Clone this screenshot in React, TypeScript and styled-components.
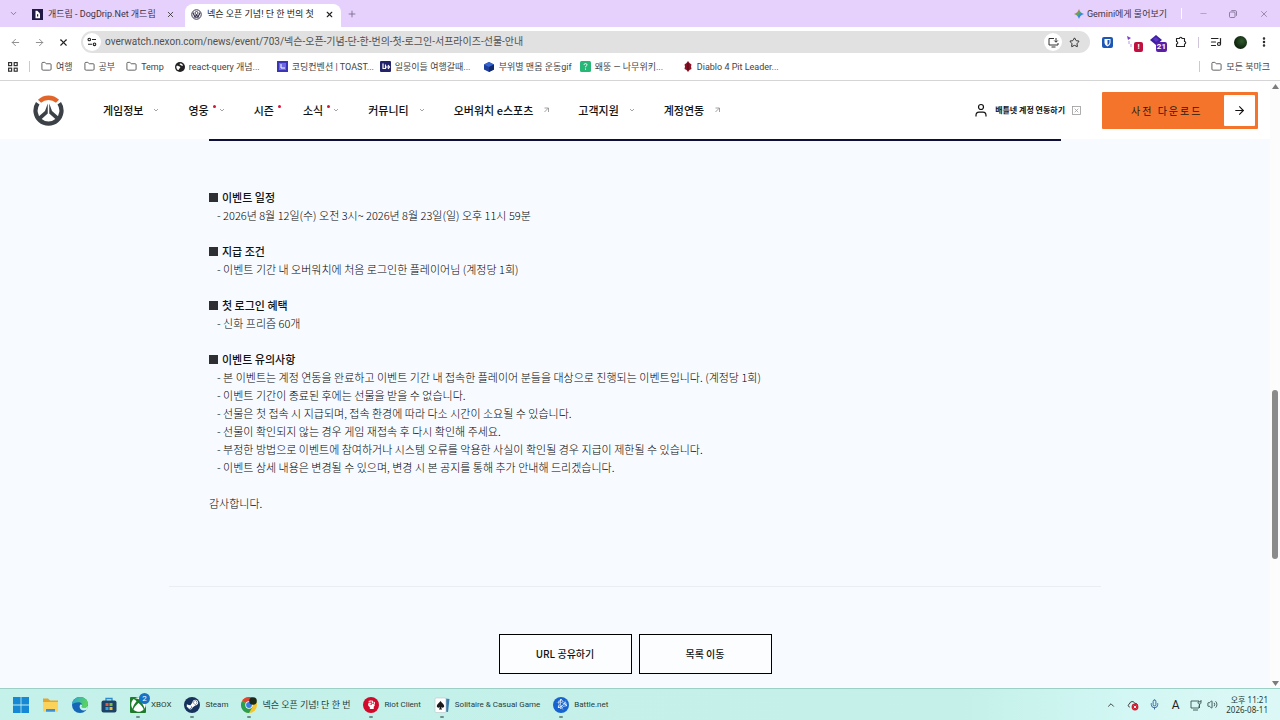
import React from 'react';
import styled, { createGlobalStyle, css } from 'styled-components';
import {
  ArrowLeft, ArrowRight, X, Plus, ChevronDown, ChevronUp, Star, Folder, Minus,
  Mic, Volume2, MoreVertical, ListMusic,
} from 'lucide-react';
import { FaXbox, FaSteamSymbol, FaBattleNet, FaHandFist } from 'react-icons/fa6';

const ui = 'Roboto, "Noto Sans CJK KR", sans-serif';
const clock = '"Noto Sans", "Noto Sans CJK KR", sans-serif';
const site = '"Noto Sans CJK KR", "Noto Sans", sans-serif';

const Global = createGlobalStyle`
  * { box-sizing: border-box; }
  body { margin: 0; background: #f7fbff; font-family: ${site}; color: #111; }
  button { font: inherit; color: inherit; border: 0; background: none; padding: 0; cursor: pointer; }
  a { color: inherit; text-decoration: none; }
  svg { display: block; flex: none; }
  ul, h1, h2, p { margin: 0; padding: 0; list-style: none; }
`;

const Screen = styled.div`
  min-height: 100vh;
  display: flex;
  flex-direction: column;
`;

/* ---------- browser chrome ---------- */

const TabStrip = styled.div`
  display: flex;
  align-items: center;
  height: 27px;
  padding: 0 8px 0 7px;
  background: #e6d0fc;
  font: 9px/14px ${ui};
  color: #3b3345;
`;

const IconButton = styled.button<{ $w?: number; $color?: string }>`
  display: flex;
  align-items: center;
  justify-content: center;
  flex: none;
  width: ${p => p.$w ?? 24}px;
  height: 20px;
  color: ${p => p.$color ?? '#222'};
`;

const Tabs = styled.div`
  display: flex;
  gap: 3px;
  margin-left: 7px;
`;

const Tab = styled.div<{ $active?: boolean }>`
  display: flex;
  align-items: center;
  gap: 5px;
  width: 156px;
  height: 23px;
  margin-top: 4px;
  padding: 0 6px 3px;
  border-radius: 8px 8px 0 0;
  ${p => p.$active && css`
    background: #fff;
    color: #222;
  `}
`;

const TabTitle = styled.span`
  flex: 1;
  white-space: nowrap;
`;

const Spacer = styled.div`
  flex: 1;
`;

const Rule = styled.span<{ $color?: string; $m?: number }>`
  width: 1px;
  height: 11px;
  margin: 0 ${p => p.$m ?? 12}px;
  background: ${p => p.$color ?? '#d0c6dc'};
`;

const GeminiButton = styled.button`
  display: flex;
  align-items: center;
  gap: 3px;
  white-space: nowrap;
`;

const WindowControls = styled.div`
  display: flex;
  gap: 16px;
`;

const Toolbar = styled.div`
  display: flex;
  align-items: center;
  height: 30px;
  padding: 0 4px 0 3px;
  background: #fff;
`;

const AddressBar = styled.form`
  display: flex;
  flex: 1;
  align-items: center;
  height: 22px;
  margin: 0 5px 0 6px;
  padding: 0 4px 0 2px;
  border-radius: 11px;
  background: #e1e1e1;
`;

const AddressInput = styled.input`
  flex: 1;
  min-width: 0;
  margin-left: 4px;
  padding: 0;
  border: 0;
  outline: 0;
  background: none;
  color: #505050;
  font: 10px/16px ${ui};
`;

const Round = styled.button`
  display: flex;
  align-items: center;
  justify-content: center;
  width: 18px;
  height: 18px;
  border-radius: 50%;
  background: #fff;
`;

const ExtensionBadge = styled.span<{ $bg: string }>`
  position: absolute;
  right: 2px;
  bottom: 0;
  min-width: 9px;
  padding: 0 1px;
  border-radius: 2px;
  background: ${p => p.$bg};
  color: #fff;
  font: 700 8px/10px ${ui};
  text-align: center;
`;

const Extension = styled(IconButton)`
  position: relative;
`;

const Avatar = styled.span`
  width: 13px;
  height: 13px;
  border-radius: 50%;
  background: radial-gradient(circle at 60% 40%, #2f5a2c, #10240f 65%);
`;

const Bookmarks = styled.nav`
  display: flex;
  align-items: center;
  gap: 11px;
  height: 24px;
  padding: 0 10px 4px 8px;
  border-bottom: 1px solid #d5d5d5;
  background: #fff;
  font: 9px/14px ${ui};
  color: #444;
`;

const Bookmark = styled.a<{ $w?: number }>`
  display: flex;
  flex: none;
  align-items: center;
  gap: 4px;
  width: ${p => (p.$w ? p.$w + 'px' : 'auto')};
  white-space: nowrap;
`;

/* ---------- site ---------- */

const Viewport = styled.div`
  display: flex;
  flex: 1;
`;

const Site = styled.div`
  flex: 1;
  min-width: 0;
`;

const SiteHeader = styled.header`
  display: flex;
  align-items: center;
  height: 58px;
  padding: 0 12px 0 33px;
  background: #fff;
  color: #111;
`;

const Nav = styled.nav`
  display: flex;
  gap: 29px;
  margin-left: 39px;
  font-size: 11px;
  font-weight: 500;
  line-height: 18px;
`;

const NavLink = styled.a`
  display: flex;
  align-items: center;
  gap: 10px;
  white-space: nowrap;
`;

const NavText = styled.span<{ $dot?: boolean }>`
  position: relative;
  ${p => p.$dot && css`
    &::after {
      content: '';
      position: absolute;
      top: 4px;
      right: -7px;
      width: 3px;
      height: 3px;
      border-radius: 50%;
      background: #d6133d;
    }
  `}
`;

const Account = styled.a`
  display: flex;
  align-items: center;
  gap: 7px;
  margin-right: 21px;
  font-size: 8px;
  font-weight: 700;
  line-height: 14px;
  white-space: nowrap;
`;

const Download = styled.button`
  display: flex;
  align-items: center;
  justify-content: space-between;
  width: 156px;
  height: 37px;
  padding: 3px 3px 3px 29px;
  border-radius: 1px;
  background: #f4742b;
  color: #2b1a12;
  font-size: 10px;
  letter-spacing: 2px;
  white-space: nowrap;
`;

const DownloadArrow = styled.span`
  display: flex;
  align-items: center;
  justify-content: center;
  width: 31px;
  height: 31px;
  border-radius: 1px;
  background: #fff;
`;

const Main = styled.main`
  max-width: 932px;
  margin: 0 auto;
`;

const Article = styled.article`
  margin: 0 40px;
  padding: 47px 0 74px;
  border-top: 2px solid #0f0f3c;
  font-size: 11px;
  font-weight: 300;
  line-height: 18px;
  color: #000;
`;

const Section = styled.section`
  margin-bottom: 18px;
`;

const SectionTitle = styled.h2`
  display: flex;
  align-items: center;
  gap: 4px;
  font-size: 11px;
  font-weight: 500;
  line-height: 18px;
  color: #111;

  &::before {
    content: '';
    width: 9px;
    height: 9px;
    background: #2e2f33;
  }
`;

const Notes = styled.ul`
  padding-left: 8px;
`;

const Actions = styled.div`
  display: flex;
  justify-content: center;
  gap: 7px;
  padding: 47px 0 14px;
  border-top: 1px solid #eaeef2;
`;

const ActionButton = styled.button`
  width: 133px;
  height: 40px;
  border: 1px solid #000;
  background: #fbfdff;
  font-size: 10px;
  font-weight: 500;
  line-height: 18px;
  color: #111;
`;

const ScrollTrack = styled.div`
  display: flex;
  flex-direction: column;
  align-items: center;
  width: 10px;
  padding: 3px 0 2px;
  background: #fcfcfc;
`;

const ScrollSpace = styled.div<{ $share: number }>`
  flex: ${p => p.$share};
`;

const ScrollThumb = styled.div`
  flex: 169;
  width: 6px;
  border-radius: 3px;
  background: #8b8b8b;
`;

/* ---------- taskbar ---------- */

const Taskbar = styled.footer`
  display: flex;
  align-items: center;
  height: 32px;
  padding: 0 12px 0 13px;
  border-top: 1px solid #9ccfc6;
  background: linear-gradient(90deg, #c5f1eb, #c4f0e9 75%, #d2f7f4 88%, #dcf8f6);
  font: 8px/14px ${ui};
  color: #25403d;
`;

const Apps = styled.div`
  display: flex;
  align-items: center;
  gap: 13px;
`;

const TaskButton = styled.button<{ $running?: boolean }>`
  position: relative;
  display: flex;
  align-items: center;
  gap: 5px;
  height: 30px;
  ${p => p.$running && css`
    &::after {
      content: '';
      position: absolute;
      left: 6px;
      bottom: 2px;
      width: 4px;
      height: 2px;
      border-radius: 1px;
      background: #6f8f8b;
    }
  `}
`;

const AppLabel = styled.span<{ $korean?: boolean }>`
  font-size: ${p => (p.$korean ? 9 : 8)}px;
  white-space: nowrap;
`;

const Disc = styled.span<{ $bg: string; $square?: boolean }>`
  display: flex;
  align-items: center;
  justify-content: center;
  width: 16px;
  height: 16px;
  border-radius: ${p => (p.$square ? '1px' : '50%')};
  background: ${p => p.$bg};
  color: #fff;
`;

const Count = styled.span`
  position: absolute;
  left: 9px;
  top: 3px;
  width: 11px;
  height: 11px;
  border-radius: 50%;
  background: #1673c4;
  color: #fff;
  font: 8px/11px ${ui};
  text-align: center;
`;

const Tray = styled.div`
  display: flex;
  align-items: center;
  color: #35504d;
`;

const ImeButton = styled(IconButton)`
  font-size: 12px;
`;

const Clock = styled.div`
  margin-left: 8px;
  font: 8px/10px ${clock};
  text-align: right;
  white-space: nowrap;
  color: #1f3b38;
`;

/* ---------- drawings ---------- */

const DogDripIcon = () => (
  <svg width="11" height="11" viewBox="0 0 11 11">
    <rect width="11" height="11" fill="#211a45" />
    <path d="M3.500 1.800h1.800l2.700 2.700v4.700h-4.500z" fill="#fff" />
    <path d="M5 5.300h1.200v2.200H5z" fill="#211a45" />
  </svg>
);

const NexonIcon = () => (
  <svg width="11" height="11" viewBox="0 0 22 22" fill="none" stroke="#3b3551">
    <circle cx="11" cy="11" r="9.500" strokeWidth="2" />
    <path d="M4 7c2 8 5 9 7 5 2 4 5 3 7-5M6 15c2 2 8 2 10 0" strokeWidth="2.200" />
    <circle cx="11" cy="8" r="3" strokeWidth="1.800" />
  </svg>
);

const GeminiIcon = () => (
  <svg width="10" height="10" viewBox="0 0 20 20">
    <defs>
      <linearGradient id="gem" x1="0" y1="0" x2="1" y2="1">
        <stop offset="0.2" stopColor="#e0574a" />
        <stop offset=".42" stopColor="#6aa84a" />
        <stop offset=".6" stopColor="#2f8de0" />
        <stop offset="1" stopColor="#3a62d8" />
      </linearGradient>
    </defs>
    <path d="M10 0c1.500 5.500 4.500 8.500 10 10-5.500 1.500-8.500 4.500-10 10-1.500-5.500-4.500-8.500-10-10 5.500-1.500 8.500-4.500 10-10z" fill="url(#gem)" />
  </svg>
);

const RestoreIcon = () => (
  <svg width="8" height="8" viewBox="0 0 8 8" fill="none" stroke="currentColor" strokeWidth=".8">
    <rect x=".5" y="2" width="5.500" height="5.500" rx="1" />
    <path d="M2.300.6h4c.7 0 1.200.5 1.200 1.200v4" />
  </svg>
);

const TuneIcon = () => (
  <svg width="10" height="10" viewBox="0 0 10 10" fill="none" stroke="#222" strokeWidth="1.100">
    <circle cx="2.300" cy="2.500" r="1.300" />
    <path d="M5 2.500h4M1 7.300h4" />
    <circle cx="7.500" cy="7.300" r="1.300" />
  </svg>
);

const InstallIcon = () => (
  <svg width="11" height="11" viewBox="0 0 22 22" fill="none" stroke="#333" strokeWidth="2">
    <path d="M12 3H2v13h18v-4M7 20h8M16 2v8M12.500 7l3.500 3.500L19.500 7" />
  </svg>
);

const ShieldIcon = () => (
  <svg width="11" height="11" viewBox="0 0 22 22">
    <rect width="22" height="22" rx="4" fill="#1e56b4" />
    <path d="M5 4h12v7c0 4-3 6-6 8-3-2-6-4-6-8z" fill="#fff" />
    <path d="M11 6h4v5c0 2.500-2 4-4 5.500z" fill="#1e56b4" />
  </svg>
);

const CursorIcon = () => (
  <svg width="12" height="14" viewBox="0 0 12 14">
    <path d="M1 1l4 2-3 2z" fill="#7a3bd0" />
    <path d="M3 6v3M5 9v3" stroke="#b694e6" strokeWidth="1" />
  </svg>
);

const DiamondIcon = () => (
  <svg width="14" height="14" viewBox="0 0 14 14">
    <path d="M6 0l6 5-6 5-6-5z" fill="#3c1fa0" />
    <path d="M3 4l3-2 3 3-3 2z" fill="#5a35c8" />
  </svg>
);

const PuzzleIcon = () => (
  <svg width="12" height="12" viewBox="0 0 24 24" fill="none" stroke="#222" strokeWidth="2.200">
    <path d="M3 5h6a2.500 2.500 0 0 1 5 0h5v6a2.500 2.500 0 0 1 0 5v5H3v-5a2.500 2.500 0 0 0 0-5z" strokeLinejoin="round" />
  </svg>
);

const AppsIcon = () => (
  <svg width="10" height="10" viewBox="0 0 10 10" fill="none" stroke="#333" strokeWidth="1.200">
    <rect x=".6" y=".6" width="3" height="3" /><rect x="6.200" y=".6" width="3" height="3" />
    <rect x=".6" y="6.200" width="3" height="3" /><rect x="6.200" y="6.200" width="3" height="3" />
  </svg>
);

const GlobeIcon = () => (
  <svg width="10" height="10" viewBox="0 0 20 20">
    <circle cx="10" cy="10" r="10" fill="#222" />
    <path d="M3 8c3-1 4 1 6 1s2 3 0 4-1 4-3 3-4-4-3-8zM10 3c3 0 5 1 6 4-2 1-4 0-5-1s-3-1-1-3z" fill="#fff" />
  </svg>
);

const ToastIcon = () => (
  <svg width="11" height="11" viewBox="0 0 11 11">
    <rect width="11" height="11" fill="#3a34b8" />
    <rect x="2" y="2" width="7" height="7" fill="#6d68de" />
    <path d="M4 3v4h4" stroke="#fff" fill="none" />
  </svg>
);

const NavyIcon = () => (
  <svg width="11" height="11" viewBox="0 0 11 11">
    <rect width="11" height="11" rx="1" fill="#23236b" />
    <path d="M3 2.500v5h2.500v-4M5.500 6h3.500M8 4l1.500 2L8 8" stroke="#fff" strokeWidth="1.200" fill="none" />
  </svg>
);

const CubeIcon = () => (
  <svg width="12" height="12" viewBox="0 0 12 12">
    <path d="M6 1l5 2.500v5L6 11 1 8.500v-5z" fill="#1d3f9b" />
    <path d="M6 1l5 2.500L6 6 1 3.500z" fill="#3563cf" />
    <path d="M6 6l5-2.500v5L6 11z" fill="#122a6e" />
  </svg>
);

const WikiIcon = () => (
  <svg width="11" height="11" viewBox="0 0 11 11">
    <rect width="11" height="11" rx="1.500" fill="#27b878" />
    <path d="M4 3.800c0-1.600 3-1.600 3 0 0 1.100-1.500 1.200-1.500 2.500M5.500 7.500v1.200" stroke="#fff" fill="none" />
  </svg>
);

const DiabloIcon = () => (
  <svg width="10" height="11" viewBox="0 0 10 11">
    <path d="M5 0l1.500 2L8.500 3.500 8 5.500 8.500 8l-2 1L5 11 3.500 9l-2-1L2 5.500l-.5-2L3.500 2z" fill="#8b1226" />
    <path d="M5 2v7" stroke="#4a0914" strokeWidth="1" />
  </svg>
);

const OverwatchLogo = () => (
  <svg width="31" height="31" viewBox="0 0 62 62" fill="none">
    <path d="M13 12.500A26 26 0 0 1 49 12.500" stroke="#e2662a" strokeWidth="9" />
    <path d="M9.500 16.500A26 26 0 1 0 52.500 16.500" stroke="#3b4146" strokeWidth="8.500" />
    <path d="M29.500 17v20L14 51l-5-6 15-13zM32.500 17v20L48 51l5-6-15-13z" fill="#3b4146" />
  </svg>
);

const SmallChevron = () => (
  <svg width="6" height="6" viewBox="0 0 6 6" fill="none" stroke="#9a9a9a" strokeWidth=".9">
    <path d="M1 2l2 2 2-2" />
  </svg>
);

const SmallExternal = () => (
  <svg width="6" height="6" viewBox="0 0 6 6" fill="none" stroke="#8a8a8a" strokeWidth=".8">
    <path d="M1.500 1h4v4M5.200 1.200L1.500 5" />
  </svg>
);

const PersonIcon = () => (
  <svg width="14" height="14" viewBox="0 0 14 14" fill="none" stroke="#111" strokeWidth="1.200">
    <circle cx="7" cy="4" r="2.500" />
    <path d="M2 13.500v-1c0-2 1.300-3.300 3-3.300h4c1.700 0 3 1.300 3 3.300v1" />
  </svg>
);

const BoxedX = () => (
  <svg width="9" height="9" viewBox="0 0 9 9" fill="none" stroke="#9a9a9a" strokeWidth=".8">
    <rect x=".5" y=".5" width="8" height="8" />
    <path d="M2.700 2.700l3.600 3.600M6.300 2.700L2.700 6.300" />
  </svg>
);

const Caret = ({ up }: { up?: boolean }) => (
  <svg width="7" height="5" viewBox="0 0 7 5">
    <path d={up ? 'M0 5l3.500-5L7 5z' : 'M0 0l3.500 5L7 0z'} fill="#7c7c7c" />
  </svg>
);

const WindowsIcon = () => (
  <svg width="16" height="16" viewBox="0 0 16 16" fill="#1688d4">
    <path d="M0 0h7.600v7.600H0zM8.400 0H16v7.600H8.400zM0 8.400h7.600V16H0zM8.400 8.400H16V16H8.400z" />
  </svg>
);

const ExplorerIcon = () => (
  <svg width="17" height="16" viewBox="0 0 17 16">
    <path d="M1 1.500h5l2 2h8V14H1z" fill="#e4a52c" />
    <path d="M1 5h15v8.500c0 .8-.5 1.200-1.200 1.200H2.200C1.500 14.700 1 14.300 1 13.500z" fill="#fbd25a" />
    <path d="M4 12h9v2.700H4z" fill="#3c8fd6" />
  </svg>
);

const EdgeIcon = () => (
  <svg width="16" height="16" viewBox="0 0 16 16">
    <defs>
      <linearGradient id="edge" x1="0" y1="0" x2="1" y2=".3">
        <stop offset="0" stopColor="#2aa3e0" />
        <stop offset="1" stopColor="#5bd45c" />
      </linearGradient>
    </defs>
    <circle cx="8" cy="8" r="8" fill="#1767b8" />
    <path d="M0 7.500C.3 3.300 3.700 0 8 0c4.600 0 8 3.200 8 6.800 0 2.600-2 4-4 4-1.800 0-2.700-.7-2.300-1.400C11 7.500 9.500 5.200 6.500 5.200 3.500 5.200.8 6.300 0 7.500z" fill="url(#edge)" />
    <path d="M9.700 9.400c-.4.700.5 1.400 2.300 1.400 1.600 0 3.200-.9 3.800-2.400.3 1.500-.3 3.300-1.200 4.300-3 1.800-7 .2-7-3 0-1 .5-1.900 1.300-2.400 1.200.4 1.400 1.300.8 2.100z" fill="#c4f1eb" />
  </svg>
);

const StoreIcon = () => (
  <svg width="16" height="16" viewBox="0 0 16 16">
    <path d="M5 4V1.500h6V4" stroke="#2a8bd0" strokeWidth="1.300" fill="none" />
    <rect x=".5" y="3.500" width="15" height="12" rx="2" fill="#1d4265" />
    <path d="M4.500 6h3v3h-3z" fill="#e8573b" /><path d="M8.500 6h3v3h-3z" fill="#7cbb3c" />
    <path d="M4.500 10h3v3h-3z" fill="#2fa6e6" /><path d="M8.500 10h3v3h-3z" fill="#f3bd2d" />
  </svg>
);

const ChromeIcon = () => (
  <svg width="16" height="16" viewBox="0 0 16 16">
    <circle cx="8" cy="8" r="8" fill="#f5c52b" />
    <path d="M8 8L1.070 4A8 8 0 0 1 14.930 4z" fill="#dd4536" />
    <path d="M8 8L1.070 4A8 8 0 0 0 8 16l3.500-6z" fill="#2c9e4f" />
    <circle cx="8" cy="8" r="3.700" fill="#fff" />
    <circle cx="8" cy="8" r="2.900" fill="#3c7be0" />
    <circle cx="12" cy="4" r="3.800" fill="#1b2b1a" />
  </svg>
);

const SolitaireIcon = () => (
  <svg width="16" height="16" viewBox="0 0 16 16">
    <path d="M7 1l8.500 1-1.500 13-8-1z" fill="#3b7fae" />
    <rect x="1" y="1" width="11" height="14.500" rx="1" fill="#fff" stroke="#b9c4c4" strokeWidth=".6" />
    <path d="M6.500 4c1 2 3.700 3 3.700 5.100 0 1.800-2.200 2.200-3.100.9.100 1 .4 1.800 1 2.500H4.900c.6-.7.900-1.500 1-2.500-.9 1.300-3.100.9-3.100-.9C2.800 7 5.500 6 6.500 4z" fill="#1b1b1b" />
  </svg>
);

const CloudIcon = () => (
  <svg width="12" height="12" viewBox="0 0 12 12" fill="none">
    <path d="M2.800 8C1 8 .6 5.400 2.500 5c.3-2.800 4.500-3.300 5.300-.6C9.500 4.200 10.500 5 10.500 6.500" stroke="#333" />
    <circle cx="8" cy="8" r="3.400" fill="#cf1f33" />
    <path d="M6.800 6.800l2.400 2.400M9.200 6.800L6.800 9.200" stroke="#fff" strokeWidth=".9" />
  </svg>
);

const NetworkIcon = () => (
  <svg width="12" height="12" viewBox="0 0 12 12" fill="none" stroke="#35504d" strokeWidth=".9">
    <path d="M7 2H1v7h8V6.500M3 11h5M9.500 5v4M8 1v2.500c0 1 .5 1.500 1.500 1.500S11 4.500 11 3.500V1M8 2.800h3" />
  </svg>
);

/* ---------- data ---------- */

type NavItem = { label: string; dot?: boolean; mark?: 'menu' | 'link' };

const navItems: NavItem[] = [
  { label: '게임정보', mark: 'menu' },
  { label: '영웅', dot: true, mark: 'menu' },
  { label: '시즌', dot: true },
  { label: '소식', dot: true, mark: 'menu' },
  { label: '커뮤니티', mark: 'menu' },
  { label: '오버워치 e스포츠', mark: 'link' },
  { label: '고객지원', mark: 'menu' },
  { label: '계정연동', mark: 'link' },
];

const bookmarks = [
  { icon: <GlobeIcon />, label: 'react-query 개념...', w: 91 },
  { icon: <ToastIcon />, label: '코딩컨벤션 | TOAST...', w: 92 },
  { icon: <NavyIcon />, label: '일뭉이들 여행갈때...', w: 92 },
  { icon: <CubeIcon />, label: '부위별 맨몸 운동gif', w: 86 },
  { icon: <WikiIcon />, label: '왜뚱 — 나무위키...', w: 92 },
  { icon: <DiabloIcon />, label: 'Diablo 4 Pit Leader...', w: 92 },
];

const sections = [
  { title: '이벤트 일정', notes: ['2026년 8월 12일(수) 오전 3시~ 2026년 8월 23일(일) 오후 11시 59분'] },
  { title: '지급 조건', notes: ['이벤트 기간 내 오버워치에 처음 로그인한 플레이어님 (계정당 1회)'] },
  { title: '첫 로그인 혜택', notes: ['신화 프리즘 60개'] },
  {
    title: '이벤트 유의사항',
    notes: [
      '본 이벤트는 계정 연동을 완료하고 이벤트 기간 내 접속한 플레이어 분들을 대상으로 진행되는 이벤트입니다. (계정당 1회)',
      '이벤트 기간이 종료된 후에는 선물을 받을 수 없습니다.',
      '선물은 첫 접속 시 지급되며, 접속 환경에 따라 다소 시간이 소요될 수 있습니다.',
      '선물이 확인되지 않는 경우 게임 재접속 후 다시 확인해 주세요.',
      '부정한 방법으로 이벤트에 참여하거나 시스템 오류를 악용한 사실이 확인될 경우 지급이 제한될 수 있습니다.',
      '이벤트 상세 내용은 변경될 수 있으며, 변경 시 본 공지를 통해 추가 안내해 드리겠습니다.',
    ],
  },
];

const FolderMark = ({ label }: { label: string }) => (
  <Bookmark href="#"><Folder size={11} strokeWidth={1.8} />{label}</Bookmark>
);

export default function App() {
  return (
    <Screen>
      <Global />
      <TabStrip>
        <IconButton $w={12} aria-label="탭 검색" $color="#6b5f78"><ChevronDown size={9} /></IconButton>
        <Tabs>
          <Tab>
            <DogDripIcon />
            <TabTitle>개드립 - DogDrip.Net 개드립</TabTitle>
            <IconButton $w={12} aria-label="탭 닫기"><X size={9} /></IconButton>
          </Tab>
          <Tab $active>
            <NexonIcon />
            <TabTitle>넥슨 오픈 기념! 단 한 번의 첫</TabTitle>
            <IconButton $w={12} aria-label="탭 닫기"><X size={9} strokeWidth={3} /></IconButton>
          </Tab>
        </Tabs>
        <IconButton $w={22} aria-label="새 탭" $color="#77698a"><Plus size={10} /></IconButton>
        <Spacer />
        <GeminiButton><GeminiIcon />Gemini에게 물어보기</GeminiButton>
        <Rule $color="#fff" $m={14} />
        <WindowControls>
          <IconButton $w={14} aria-label="최소화" $color="#a393b5"><Minus size={9} /></IconButton>
          <IconButton $w={14} aria-label="이전 크기로" $color="#77698a"><RestoreIcon /></IconButton>
          <IconButton $w={16} aria-label="닫기" $color="#77698a"><X size={10} strokeWidth={1.6} /></IconButton>
        </WindowControls>
      </TabStrip>

      <Toolbar>
        <IconButton aria-label="뒤로" $color="#888"><ArrowLeft size={11} /></IconButton>
        <IconButton aria-label="앞으로" $color="#888"><ArrowRight size={11} /></IconButton>
        <IconButton aria-label="중지"><X size={11} strokeWidth={2.4} /></IconButton>
        <AddressBar>
          <Round type="button" aria-label="사이트 정보"><TuneIcon /></Round>
          <AddressInput
            aria-label="주소창"
            defaultValue="overwatch.nexon.com/news/event/703/넥슨-오픈-기념-단-한-번의-첫-로그인-서프라이즈-선물-안내"
          />
          <Round type="button" aria-label="앱 설치"><InstallIcon /></Round>
          <IconButton type="button" aria-label="북마크 추가"><Star size={11} /></IconButton>
        </AddressBar>
        <IconButton aria-label="비밀번호 관리자"><ShieldIcon /></IconButton>
        <Extension aria-label="확장 프로그램 알림" $w={26}><CursorIcon /><ExtensionBadge $bg="#c01040">!</ExtensionBadge></Extension>
        <Extension aria-label="확장 프로그램 21"><DiamondIcon /><ExtensionBadge $bg="#5a1fa8">21</ExtensionBadge></Extension>
        <IconButton aria-label="확장 프로그램"><PuzzleIcon /></IconButton>
        <Rule $m={5} />
        <IconButton aria-label="미디어"><ListMusic size={12} strokeWidth={2.4} /></IconButton>
        <IconButton aria-label="프로필"><Avatar /></IconButton>
        <IconButton aria-label="메뉴"><MoreVertical size={12} strokeWidth={3} /></IconButton>
      </Toolbar>

      <Bookmarks>
        <AppsIcon />
        <Rule $m={0} />
        <FolderMark label="여행" />
        <FolderMark label="공부" />
        <FolderMark label="Temp" />
        {bookmarks.map(b => (
          <Bookmark key={b.label} href="#" $w={b.w}>{b.icon}{b.label}</Bookmark>
        ))}
        <Spacer />
        <Rule $m={0} />
        <FolderMark label="모든 북마크" />
      </Bookmarks>

      <Viewport>
        <Site>
          <SiteHeader>
            <a href="#" aria-label="오버워치"><OverwatchLogo /></a>
            <Nav>
              {navItems.map(n => (
                <NavLink key={n.label} href="#">
                  <NavText $dot={n.dot}>{n.label}</NavText>
                  {n.mark === 'menu' && <SmallChevron />}
                  {n.mark === 'link' && <SmallExternal />}
                </NavLink>
              ))}
            </Nav>
            <Spacer />
            <Account href="#"><PersonIcon />배틀넷 계정 연동하기<BoxedX /></Account>
            <Download>
              사전 다운로드
              <DownloadArrow><ArrowRight size={13} color="#111" /></DownloadArrow>
            </Download>
          </SiteHeader>

          <Main>
            <Article>
              {sections.map(s => (
                <Section key={s.title}>
                  <SectionTitle>{s.title}</SectionTitle>
                  <Notes>
                    {s.notes.map(n => <li key={n}>- {n}</li>)}
                  </Notes>
                </Section>
              ))}
              <p>감사합니다.</p>
            </Article>
            <Actions>
              <ActionButton>URL 공유하기</ActionButton>
              <ActionButton>목록 이동</ActionButton>
            </Actions>
          </Main>
        </Site>
        <ScrollTrack aria-hidden="true">
          <Caret up />
          <ScrollSpace $share={300} />
          <ScrollThumb />
          <ScrollSpace $share={122} />
          <Caret />
        </ScrollTrack>
      </Viewport>

      <Taskbar>
        <Apps>
          <TaskButton aria-label="시작"><WindowsIcon /></TaskButton>
          <TaskButton aria-label="파일 탐색기"><ExplorerIcon /></TaskButton>
          <TaskButton aria-label="Edge"><EdgeIcon /></TaskButton>
          <TaskButton aria-label="Store"><StoreIcon /></TaskButton>
          <TaskButton $running>
            <Disc $bg="#1c7c2c" $square><FaXbox size={15} /></Disc>
            <Count>2</Count>
            <AppLabel>XBOX</AppLabel>
          </TaskButton>
          <TaskButton $running>
            <Disc $bg="#16325c"><FaSteamSymbol size={13} /></Disc>
            <AppLabel>Steam</AppLabel>
          </TaskButton>
          <TaskButton $running>
            <ChromeIcon />
            <AppLabel $korean>넥슨 오픈 기념! 단 한 번</AppLabel>
          </TaskButton>
          <TaskButton $running>
            <Disc $bg="#d10a2c"><FaHandFist size={9} /></Disc>
            <AppLabel>Riot Client</AppLabel>
          </TaskButton>
          <TaskButton $running>
            <SolitaireIcon />
            <AppLabel>Solitaire &amp; Casual Game</AppLabel>
          </TaskButton>
          <TaskButton $running>
            <Disc $bg="#1764d0"><FaBattleNet size={11} /></Disc>
            <AppLabel>Battle.net</AppLabel>
          </TaskButton>
        </Apps>
        <Spacer />
        <Tray>
          <IconButton $w={22} aria-label="숨겨진 아이콘"><ChevronUp size={10} /></IconButton>
          <IconButton $w={21} aria-label="OneDrive"><CloudIcon /></IconButton>
          <IconButton $w={22} aria-label="마이크" $color="#2f5f96"><Mic size={11} /></IconButton>
          <ImeButton $w={21}>A</ImeButton>
          <IconButton $w={20} aria-label="네트워크"><NetworkIcon /></IconButton>
          <IconButton $w={12} aria-label="볼륨" $color="#35504d"><Volume2 size={11} /></IconButton>
          <Clock>오후 11:21<br />2026-08-11</Clock>
        </Tray>
      </Taskbar>
    </Screen>
  );
}
